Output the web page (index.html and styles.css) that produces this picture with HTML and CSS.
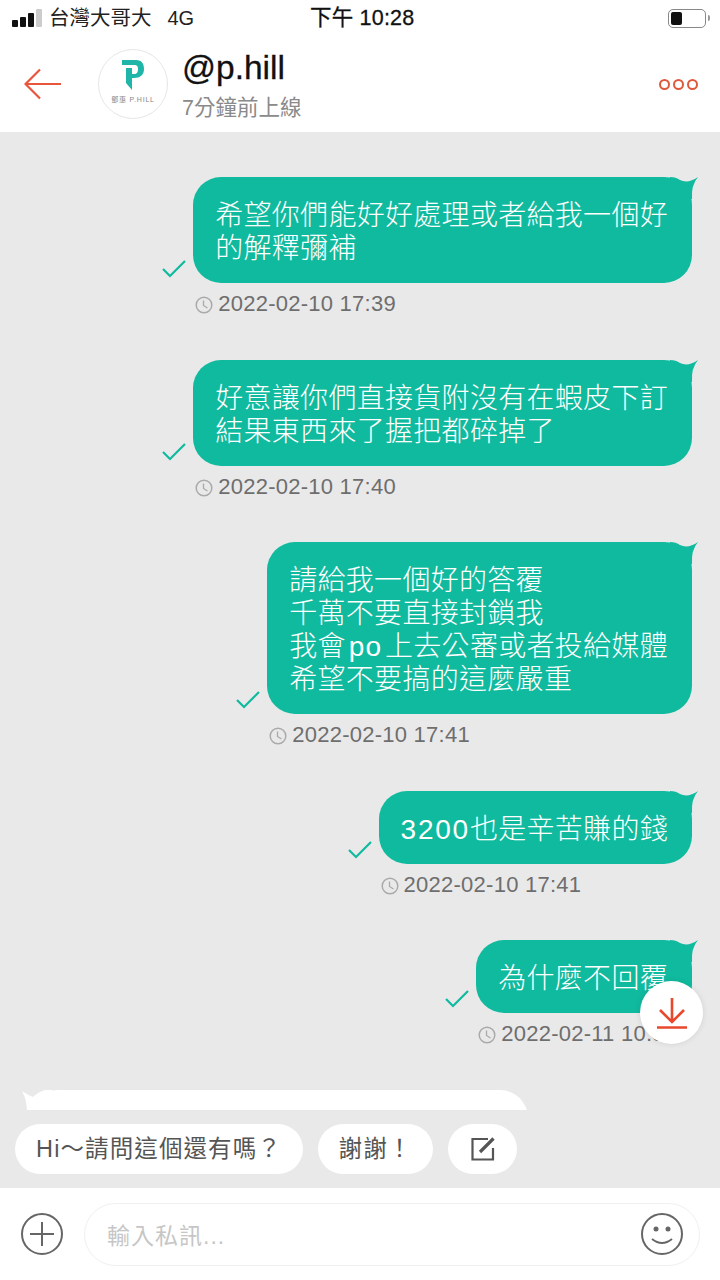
FILE: index.html
```html
<!DOCTYPE html>
<html lang="zh-Hant">
<head>
    <meta charset="UTF-8">
    <meta name="viewport" content="width=device-width, initial-scale=1.0">
    <title>@p.hill</title>
    <link rel="stylesheet" href="styles.css">
</head>
<body>
    <div class="status">
        <div class="status-left">
            <span class="signal"><i></i><i></i><i></i><i></i></span>
            <span class="carrier">台灣大哥大</span>
            <span class="net">4G</span>
        </div>
        <div class="clock">下午 10:28</div>
        <div class="battery"><span class="battery-fill"></span></div>
    </div>

    <header class="topbar">
        <svg class="back" width="38" height="32" viewBox="0 0 38 32">
            <path d="M37 16H2M16 1.500 1.500 16 16 30.500" fill="none" stroke="#e8573b" stroke-width="2.200"/>
        </svg>
        <div class="avatar">
            <svg width="24" height="32" viewBox="0 0 24 32">
                <path d="M1 1H15C21 1 23 5 23 10C23 16 19 19 13 19H11V15H13C16 15 17 13 17 10C17 7 16 6 13 6H1Z M5 9H11V31L5 24Z" fill="#1fb5a8"/>
            </svg>
            <span class="avatar-label">鄧惠 P.HILL</span>
        </div>
        <div class="who">
            <div class="name">@p.hill</div>
            <div class="seen">7分鐘前上線</div>
        </div>
        <div class="more"><i></i><i></i><i></i></div>
    </header>

    <main class="chat">
        <div class="msg">
            <svg class="check" width="24" height="18" viewBox="0 0 24 18"><path d="M1 9 8 16 23 1" fill="none" stroke="#10ba9e" stroke-width="2.200"/></svg>
            <div class="bubble">希望你們能好好處理或者給我一個好<br>的解釋彌補<svg class="tail" width="28" height="22" viewBox="0 0 28 22"><path d="M0 0Q6 0 10 3Q18 7 28 0Q21 8 22 22H0Z" fill="#10ba9e"/></svg></div>
            <div class="meta"><svg class="clock-ico" width="18" height="18" viewBox="0 0 18 18"><circle cx="9" cy="9" r="7.800" fill="none" stroke="#aaa" stroke-width="1.500"/><path d="M8.500 4.500V9.500L12.500 12" fill="none" stroke="#aaa" stroke-width="1.300"/></svg>2022-02-10 17:39</div>
        </div>

        <div class="msg">
            <svg class="check" width="24" height="18" viewBox="0 0 24 18"><path d="M1 9 8 16 23 1" fill="none" stroke="#10ba9e" stroke-width="2.200"/></svg>
            <div class="bubble">好意讓你們直接貨附沒有在蝦皮下訂<br>結果東西來了握把都碎掉了<svg class="tail" width="28" height="22" viewBox="0 0 28 22"><path d="M0 0Q6 0 10 3Q18 7 28 0Q21 8 22 22H0Z" fill="#10ba9e"/></svg></div>
            <div class="meta"><svg class="clock-ico" width="18" height="18" viewBox="0 0 18 18"><circle cx="9" cy="9" r="7.800" fill="none" stroke="#aaa" stroke-width="1.500"/><path d="M8.500 4.500V9.500L12.500 12" fill="none" stroke="#aaa" stroke-width="1.300"/></svg>2022-02-10 17:40</div>
        </div>

        <div class="msg">
            <svg class="check" width="24" height="18" viewBox="0 0 24 18"><path d="M1 9 8 16 23 1" fill="none" stroke="#10ba9e" stroke-width="2.200"/></svg>
            <div class="bubble">請給我一個好的答覆<br>千萬不要直接封鎖我<br>我會<span class="latin po">po</span>上去公審或者投給媒體<br>希望不要搞的這麼嚴重<svg class="tail" width="28" height="22" viewBox="0 0 28 22"><path d="M0 0Q6 0 10 3Q18 7 28 0Q21 8 22 22H0Z" fill="#10ba9e"/></svg></div>
            <div class="meta"><svg class="clock-ico" width="18" height="18" viewBox="0 0 18 18"><circle cx="9" cy="9" r="7.800" fill="none" stroke="#aaa" stroke-width="1.500"/><path d="M8.500 4.500V9.500L12.500 12" fill="none" stroke="#aaa" stroke-width="1.300"/></svg>2022-02-10 17:41</div>
        </div>

        <div class="msg">
            <svg class="check" width="24" height="18" viewBox="0 0 24 18"><path d="M1 9 8 16 23 1" fill="none" stroke="#10ba9e" stroke-width="2.200"/></svg>
            <div class="bubble"><span class="latin">3200</span>也是辛苦賺的錢<svg class="tail" width="28" height="22" viewBox="0 0 28 22"><path d="M0 0Q6 0 10 3Q18 7 28 0Q21 8 22 22H0Z" fill="#10ba9e"/></svg></div>
            <div class="meta"><svg class="clock-ico" width="18" height="18" viewBox="0 0 18 18"><circle cx="9" cy="9" r="7.800" fill="none" stroke="#aaa" stroke-width="1.500"/><path d="M8.500 4.500V9.500L12.500 12" fill="none" stroke="#aaa" stroke-width="1.300"/></svg>2022-02-10 17:41</div>
        </div>

        <div class="msg">
            <svg class="check" width="24" height="18" viewBox="0 0 24 18"><path d="M1 9 8 16 23 1" fill="none" stroke="#10ba9e" stroke-width="2.200"/></svg>
            <div class="bubble">為什麼不回覆<svg class="tail" width="28" height="22" viewBox="0 0 28 22"><path d="M0 0Q6 0 10 3Q18 7 28 0Q21 8 22 22H0Z" fill="#10ba9e"/></svg></div>
            <div class="meta"><svg class="clock-ico" width="18" height="18" viewBox="0 0 18 18"><circle cx="9" cy="9" r="7.800" fill="none" stroke="#aaa" stroke-width="1.500"/><path d="M8.500 4.500V9.500L12.500 12" fill="none" stroke="#aaa" stroke-width="1.300"/></svg>2022-02-11 10:30</div>
        </div>

        <div class="incoming"><svg class="tail-in" width="30" height="22" viewBox="0 0 30 22"><path d="M0 1Q6 5 11 7Q16 2 23 0H30V22H5Q5 10 0 1Z" fill="#fff"/></svg></div>

        <button class="jump">
            <svg width="32" height="32" viewBox="0 0 32 32">
                <path d="M16 1V24M4 13 16 25 28 13M1 30.500H31" fill="none" stroke="#e8492c" stroke-width="2.600"/>
            </svg>
        </button>
    </main>

    <div class="quick">
        <span class="pill pill-hi">Hi～請問這個還有嗎？</span>
        <span class="pill pill-thanks">謝謝！</span>
        <span class="pill pill-edit">
            <svg width="24" height="24" viewBox="0 0 24 24">
                <path d="M17 2H1.500V22.500H22V11" fill="none" stroke="#555" stroke-width="2.200"/>
                <path d="M9 15 22.500 1.500" fill="none" stroke="#555" stroke-width="3.200"/>
            </svg>
        </span>
    </div>

    <footer class="composer">
        <svg class="ico" width="42" height="42" viewBox="0 0 42 42">
            <circle cx="21" cy="21" r="20" fill="none" stroke="#666" stroke-width="2"/>
            <path d="M21 9V33M9 21H33" fill="none" stroke="#666" stroke-width="2"/>
        </svg>
        <div class="inputbox">
            <span class="placeholder">輸入私訊...</span>
            <svg class="ico" width="42" height="42" viewBox="0 0 42 42">
                <circle cx="21" cy="21" r="20" fill="none" stroke="#666" stroke-width="2"/>
                <circle cx="15" cy="16" r="2.500" fill="#666"/>
                <circle cx="27" cy="16" r="2.500" fill="#666"/>
                <path d="M11 26Q21 34 31 26" fill="none" stroke="#666" stroke-width="2"/>
            </svg>
        </div>
    </footer>
</body>
</html>
```

FILE: styles.css
```css
* {
    box-sizing: border-box;
}

body {
    margin: 0;
    width: 720px;
    height: 1280px;
    display: flex;
    flex-direction: column;
    overflow: hidden;
    font-family: "Liberation Sans", "Noto Sans CJK TC", sans-serif;
    background-color: #fff;
    color: #111;
}

/* status bar */
.status {
    height: 36px;
    flex-shrink: 0;
    display: flex;
    align-items: center;
    justify-content: space-between;
    padding: 0 12px;
    position: relative;
}

.status-left {
    display: flex;
    align-items: center;
    font-size: 20.500px;
    line-height: 30px;
    color: #222;
    margin-top: -1px;
}

.signal {
    display: flex;
    align-items: flex-end;
    gap: 2px;
    width: 37px;
}

.signal i {
    width: 6px;
    background-color: #111;
    border-radius: 1px;
}

.signal i:nth-child(1) { height: 7px; }
.signal i:nth-child(2) { height: 10px; }
.signal i:nth-child(3) { height: 14px; }
.signal i:nth-child(4) { height: 18px; background-color: #ccc; }

.net {
    margin-left: 16px;
    font-size: 20px;
}

.clock {
    position: absolute;
    left: 310px;
    top: 0;
    font-size: 21.500px;
    letter-spacing: 0.200px;
    -webkit-text-stroke: 0.300px #111;
}

.battery {
    margin-left: auto;
    margin-right: 2px;
    width: 38px;
    height: 19px;
    border: 1.500px solid #888;
    border-radius: 5px;
    padding: 2px;
    position: relative;
}

.battery::after {
    content: "";
    position: absolute;
    right: -5px;
    top: 5px;
    width: 2px;
    height: 6px;
    background-color: #999;
    border-radius: 0 2px 2px 0;
}

.battery-fill {
    display: block;
    width: 11px;
    height: 100%;
    background-color: #111;
    border-radius: 2px;
}

/* header */
.topbar {
    height: 96px;
    flex-shrink: 0;
    display: flex;
    align-items: center;
    padding: 0 24px;
    position: relative;
}

.avatar {
    width: 70px;
    height: 70px;
    margin-left: 36px;
    margin-top: -1px;
    border: 1.500px solid #e6e6e6;
    border-radius: 50%;
    display: flex;
    flex-direction: column;
    align-items: center;
    padding-top: 9px;
}

.avatar-label {
    font-size: 7px;
    letter-spacing: 0.800px;
    color: #888;
    white-space: nowrap;
    margin-top: 3px;
}

.who {
    margin-left: 14px;
    margin-top: 2px;
}

.name {
    font-size: 33.500px;
    line-height: 40px;
    color: #111;
    -webkit-text-stroke: 0.300px #111;
}

.seen {
    font-size: 21.500px;
    line-height: 30px;
    margin-top: 5px;
    color: #8a8a8a;
}

.more {
    margin-left: auto;
    margin-right: -2px;
    display: flex;
    gap: 3px;
}

.more i {
    width: 11px;
    height: 11px;
    border: 2.500px solid #e0583c;
    border-radius: 50%;
}

/* chat area */
.chat {
    flex: 1;
    min-height: 0;
    overflow: hidden;
    position: relative;
    background-color: #e9e9e9;
    padding: 45px 28px 0 22px;
    display: flex;
    flex-direction: column;
}

.msg {
    flex-shrink: 0;
    display: grid;
    grid-template-columns: auto auto;
    justify-content: end;
    column-gap: 7px;
    margin-bottom: 40.500px;
}

.check {
    align-self: end;
    margin-bottom: 5px;
}

.bubble {
    position: relative;
    background-color: #10ba9e;
    color: #fff;
    font-family: "Noto Sans CJK TC", sans-serif;
    font-size: 28px;
    font-weight: 300;
    letter-spacing: 0.300px;
    line-height: 33px;
    padding: 20px 24px 20px 22px;
    border-radius: 28px;
    white-space: nowrap;
}

.latin {
    font-family: "Liberation Sans", sans-serif;
    letter-spacing: 1.750px;
    line-height: 0;
}

.po {
    margin: 0 3px;
    letter-spacing: 1px;
}

.tail {
    position: absolute;
    top: 0;
    right: -6px;
}

.meta {
    grid-column: 2;
    display: flex;
    align-items: center;
    gap: 5px;
    margin-top: 6px;
    margin-left: 2px;
    height: 30px;
    font-size: 22px;
    letter-spacing: 0.250px;
    color: #6e6e6e;
}

.clock-ico {
    margin-top: 2px;
}

.incoming {
    position: relative;
    width: 498px;
    height: 70px;
    flex-shrink: 0;
    margin-left: 8px;
    background-color: #fff;
    border-radius: 28px;
}

.tail-in {
    position: absolute;
    top: 0;
    left: -8px;
}

.jump {
    position: absolute;
    left: 640px;
    top: 849px;
    width: 63px;
    height: 63px;
    padding: 0;
    border: none;
    border-radius: 50%;
    background-color: #fff;
    box-shadow: 0 0 6px rgba(0, 0, 0, 0.100);
    display: flex;
    align-items: center;
    justify-content: center;
}

/* quick replies */
.quick {
    height: 78px;
    flex-shrink: 0;
    background-color: #e9e9e9;
    padding: 14px 15px;
    display: flex;
    gap: 15px;
}

.pill {
    height: 50px;
    border-radius: 25px;
    background-color: #fff;
    display: flex;
    align-items: center;
    justify-content: center;
    font-size: 23.500px;
    letter-spacing: 1.100px;
    line-height: 30px;
    padding-bottom: 1px;
    color: #555;
    white-space: nowrap;
}

.pill-hi { width: 288px; }
.pill-thanks { width: 115px; }
.pill-edit { width: 69px; padding-bottom: 0; }

/* input */
.composer {
    height: 92px;
    flex-shrink: 0;
    display: flex;
    align-items: center;
    padding: 0 21px;
    gap: 21px;
    background-color: #fff;
}

.inputbox {
    flex: 1;
    height: 63px;
    margin-right: -1px;
    border: 1.500px solid #f0f0f0;
    border-radius: 32px;
    display: flex;
    align-items: center;
    justify-content: space-between;
    padding: 0 16px 0 22px;
}

.placeholder {
    font-size: 23px;
    letter-spacing: 1px;
    color: #c6c6c6;
}

.ico {
    flex-shrink: 0;
}
```
